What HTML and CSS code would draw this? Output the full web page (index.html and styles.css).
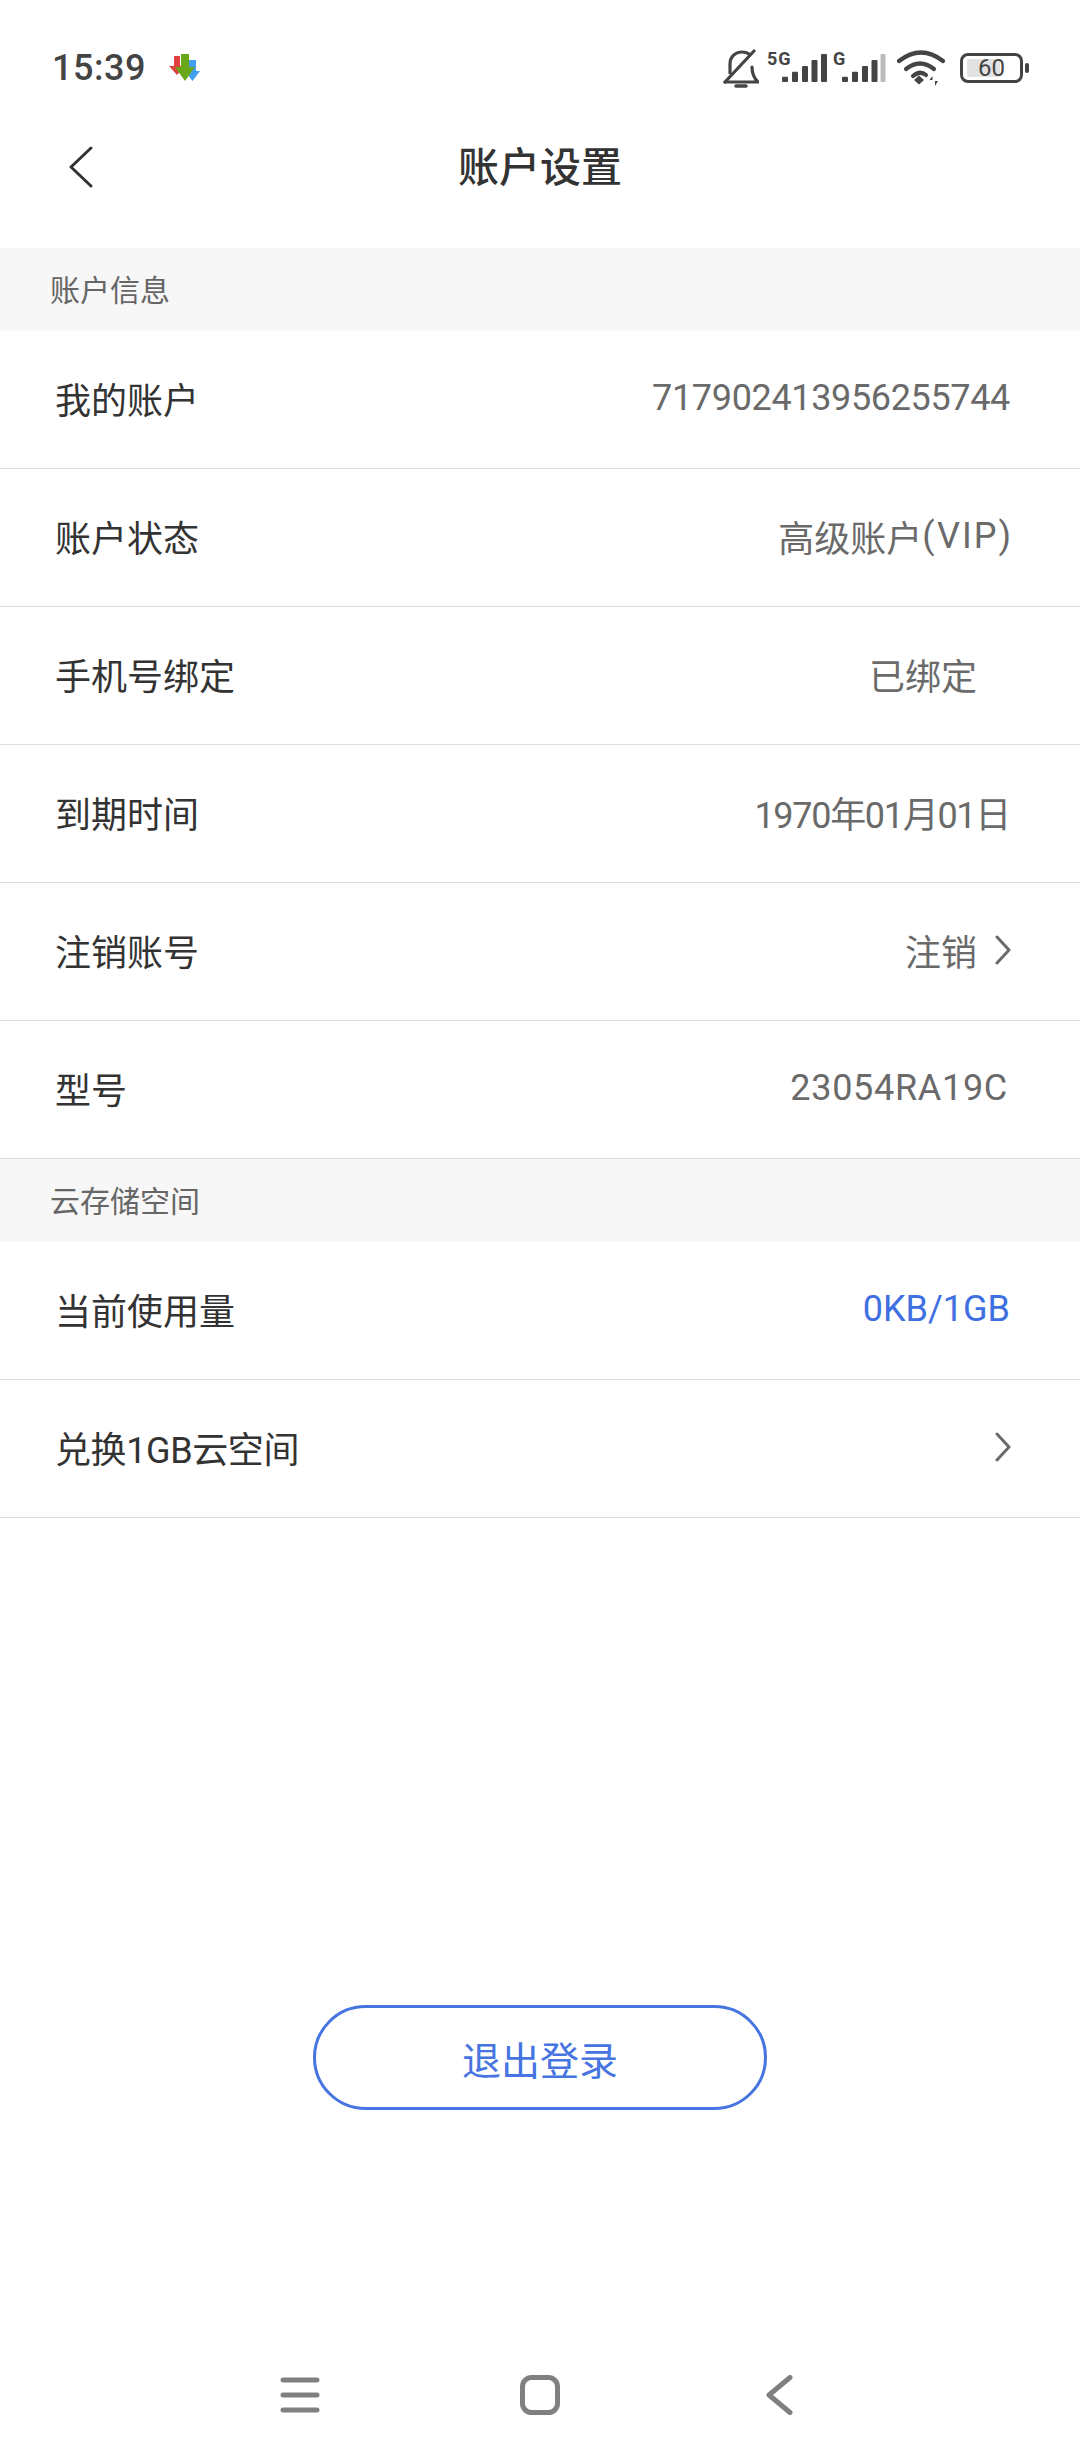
FILE: index.html
```html
<!DOCTYPE html>
<html lang="zh-CN">
<head>
    <meta charset="UTF-8">
    <meta name="viewport" content="width=device-width, initial-scale=1.0">
    <title>账户设置</title>
    <link rel="stylesheet" href="styles.css">
</head>
<body>
<div class="page">

    <div class="status-bar">
        <div class="status-left">
            <span class="time">15:39</span>
            <svg class="app-icon" width="34" height="36" viewBox="0 0 34 36">
                <path fill="#e04040" d="M6 6h6v10h5l-8 9-8-9h5z"/>
                <path fill="#42a0ee" d="M21 10h7v11h4l-7.500 10-7.500-10h4z"/>
                <path fill="#68a818" d="M13 4h8v13h6l-10 14-10-14h6z"/>
            </svg>
        </div>
        <div class="status-right">
            <svg class="bell" width="36" height="40" viewBox="0 0 36 40" fill="none" stroke="#444" stroke-width="3.200" stroke-linecap="round" stroke-linejoin="round">
                <path d="M2 34H35c-3-3-6-7-6-15"/>
                <path d="M7 25c0-3 0-6 0-9C7 9 12 4 19 4c3 0 5 .5 7 2"/>
                <path d="M2 34L31 3"/>
                <path d="M13 38h10" stroke-width="3.500"/>
            </svg>
            <svg class="signal" width="60" height="44" viewBox="0 0 60 44">
                <text class="net-label" x="0" y="19">5G</text>
                <g fill="#444">
                    <rect x="15" y="30.700" width="6" height="5.300" rx="1"/>
                    <rect x="25" y="25.700" width="6" height="10.300" rx="1"/>
                    <rect x="35" y="20" width="6" height="16" rx="1"/>
                    <rect x="44.500" y="14" width="6" height="22" rx="1"/>
                    <rect x="54" y="8" width="6" height="28" rx="1"/>
                </g>
            </svg>
            <svg class="signal second" width="53" height="44" viewBox="0 0 53 44">
                <text class="net-label" x="0" y="19">G</text>
                <g fill="#444">
                    <rect x="9" y="30.700" width="6" height="5.300" rx="1"/>
                    <rect x="19" y="25.700" width="6" height="10.300" rx="1"/>
                    <rect x="29" y="20" width="6" height="16" rx="1"/>
                    <rect x="38.500" y="14" width="6" height="22" rx="1"/>
                    <rect fill="#bbb" x="47.500" y="8" width="5" height="28" rx="1"/>
                </g>
            </svg>
            <svg class="wifi" width="48" height="36" viewBox="0 0 48 36" fill="none" stroke="#444" stroke-width="4.200" stroke-linecap="round">
                <path d="M2 11Q24-6 46 11"/>
                <path d="M9 19Q23 8 37 19"/>
                <path d="M16 26Q23 20 29 25"/>
                <path fill="#444" stroke="none" d="M17 30l5-4.500 5 4.500-5 4.500z"/>
                <path fill="#444" stroke="none" d="M35.500 35v-5h-3l3-4zM38 26v5h3l-3 5z"/>
            </svg>
            <div class="battery">
                <div class="battery-body">
                    <div class="battery-fill"></div>
                    <span class="battery-text">60</span>
                </div>
                <div class="battery-nub"></div>
            </div>
        </div>
    </div>

    <div class="title-bar">
        <svg class="back" width="26" height="42" viewBox="0 0 26 42" fill="none" stroke="#333" stroke-width="3" stroke-linecap="round" stroke-linejoin="round">
            <path d="M23 2L3 21l20 19"/>
        </svg>
        <h1>账户设置</h1>
    </div>

    <div class="section-title">账户信息</div>
    <div class="row">
        <span class="label">我的账户</span>
        <span class="value tight">717902413956255744</span>
    </div>
    <div class="row">
        <span class="label">账户状态</span>
        <span class="value">高级账户<span class="vip">(VIP)</span></span>
    </div>
    <div class="row">
        <span class="label">手机号绑定</span>
        <span class="value indent">已绑定</span>
    </div>
    <div class="row">
        <span class="label">到期时间</span>
        <span class="value date">1970年01月01日</span>
    </div>
    <div class="row">
        <span class="label">注销账号</span>
        <span class="value">注销<svg class="chevron" width="16" height="30" viewBox="0 0 16 30" fill="none" stroke="#6a6a6a" stroke-width="3" stroke-linecap="round" stroke-linejoin="round"><path d="M2 2l12 13L2 28"/></svg></span>
    </div>
    <div class="row">
        <span class="label">型号</span>
        <span class="value model">23054RA19C</span>
    </div>

    <div class="section-title">云存储空间</div>
    <div class="row">
        <span class="label">当前使用量</span>
        <span class="value blue">0KB/1GB</span>
    </div>
    <div class="row">
        <span class="label narrow">兑换1GB云空间</span>
        <span class="value"><svg class="chevron" width="16" height="30" viewBox="0 0 16 30" fill="none" stroke="#6a6a6a" stroke-width="3" stroke-linecap="round" stroke-linejoin="round"><path d="M2 2l12 13L2 28"/></svg></span>
    </div>

    <button class="logout" type="button">退出登录</button>

    <div class="nav-bar">
        <svg width="40" height="40" viewBox="0 0 40 40" stroke="#808080" stroke-width="5" stroke-linecap="round">
            <path d="M3 5h34M3 20h34M3 35h34"/>
        </svg>
        <svg width="40" height="40" viewBox="0 0 40 40" fill="none" stroke="#808080" stroke-width="5">
            <rect x="2.500" y="2.500" width="35" height="35" rx="9"/>
        </svg>
        <svg class="nav-back" width="28" height="40" viewBox="0 0 28 40" fill="none" stroke="#808080" stroke-width="5" stroke-linecap="round" stroke-linejoin="round">
            <path d="M25 2.500L4 20l21 17.500"/>
        </svg>
    </div>

</div>
</body>
</html>
```

FILE: styles.css
```css
* {
    box-sizing: border-box;
}
body {
    margin: 0;
    background-color: #fff;
    font-family: Roboto, "Noto Sans CJK SC", sans-serif;
}
.page {
    width: 1080px;
    height: 2460px;
    display: flex;
    flex-direction: column;
}
.status-bar {
    height: 104px;
    padding: 32px 51px 0 52px;
    display: flex;
    justify-content: space-between;
    align-items: center;
}
.status-left {
    display: flex;
    align-items: center;
    gap: 22px;
}
.time {
    font-size: 36px;
    font-weight: 500;
    letter-spacing: 0.5px;
    color: #444;
}
.status-right {
    display: flex;
    align-items: center;
}
.bell {
    margin-right: 8px;
}
.second {
    margin-left: 6px;
}
.wifi {
    margin-left: 11px;
}
.net-label {
    font-family: Roboto, sans-serif;
    font-size: 18px;
    font-weight: 700;
    letter-spacing: 1px;
    fill: #444;
}
.battery {
    display: flex;
    align-items: center;
    gap: 2px;
    margin-left: 15px;
}
.battery-body {
    position: relative;
    width: 63px;
    height: 30px;
    border: 3px solid #444;
    border-radius: 8px;
    display: flex;
    align-items: center;
    justify-content: center;
}
.battery-fill {
    position: absolute;
    left: 4px;
    top: 3px;
    bottom: 3px;
    width: 33px;
    background-color: #e2e2e2;
    border-radius: 2px;
}
.battery-text {
    position: relative;
    font-size: 24px;
    color: #444;
}
.battery-nub {
    width: 4px;
    height: 10px;
    background-color: #444;
    border-radius: 2px;
}
.title-bar {
    position: relative;
    height: 126px;
    margin-bottom: 18px;
    padding-bottom: 6px;
    display: flex;
    align-items: center;
    justify-content: center;
}
.title-bar .back {
    position: absolute;
    left: 68px;
    top: 42px;
}
h1 {
    margin: 0;
    font-size: 41px;
    font-weight: 500;
    color: #333;
}
.section-title {
    height: 83px;
    padding: 0 0 3px 50px;
    display: flex;
    align-items: center;
    background-color: #f7f7f7;
    font-size: 30px;
    color: #666;
}
.row {
    height: 138px;
    padding: 0 70px 3px 55px;
    display: flex;
    align-items: center;
    justify-content: space-between;
    border-bottom: 1px solid #ddd;
}
.label {
    font-size: 36px;
    color: #333;
}
.narrow {
    letter-spacing: -0.4px;
}
.value {
    display: flex;
    align-items: center;
    font-size: 36px;
    color: #6a6a6a;
}
.value .chevron {
    margin: 0 -1px 0 18px;
}
.tight {
    letter-spacing: -0.35px;
}
.date {
    letter-spacing: -1.3px;
}
.model {
    margin-right: 2px;
    letter-spacing: 0.7px;
}
.vip {
    margin-right: -3px;
    letter-spacing: 2px;
}
.indent {
    margin-right: 33px;
}
.blue {
    color: #3f6fe0;
}
.logout {
    display: block;
    width: 454px;
    height: 105px;
    margin: 487px auto 0;
    border: 3px solid #4674e0;
    border-radius: 53px;
    background-color: #fff;
    font-family: "Noto Sans CJK SC", sans-serif;
    font-size: 39px;
    color: #4674e0;
}
.nav-bar {
    margin-top: auto;
    height: 85px;
    padding-left: 280px;
    display: flex;
    gap: 200px;
    align-items: flex-start;
}
.nav-back {
    margin-left: 5px;
}
```
